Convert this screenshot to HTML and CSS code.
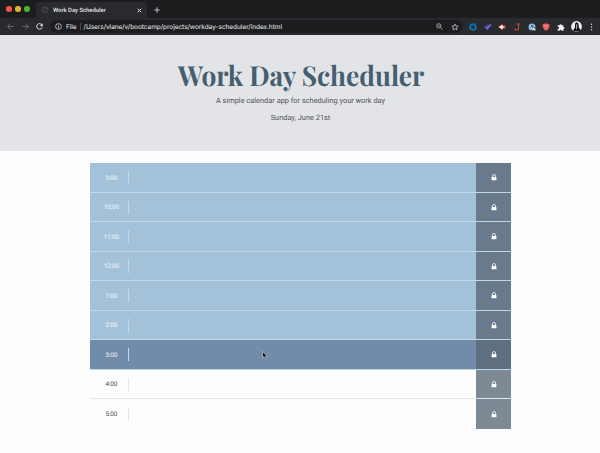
FILE: index.html
```html
<!DOCTYPE html>
<html lang="en">
<head>
<meta charset="utf-8">
<title>Work Day Scheduler</title>
<link rel="stylesheet" href="styles.css">
</head>
<body>
<svg width="0" height="0" class="defs">
  <symbol id="lock" viewBox="0 0 6 7"><path d="M1.5 3V2a1.5 1.5 0 0 1 3 0v1" fill="none" stroke="#fff" stroke-width=".8"/><rect x=".6" y="2.9" width="4.8" height="3.4" rx=".4" fill="#fff"/></symbol>
</svg>
<div class="tabs">
  <div class="lights"><i class="red"></i><i class="yellow"></i><i class="green"></i></div>
  <div class="tab">
    <svg width="8" height="8" viewBox="0 0 8 8"><circle cx="4" cy="4" r="3" fill="#292a2d" stroke="#48494c"/><path d="M1.5 2.5l2 1.2L3 5l1.5 1.4M4.5 1.2l.5 1.5 1.6.8" fill="none" stroke="#4c4d50" stroke-width=".8"/></svg>
    <span class="tab-title">Work Day Scheduler</span>
    <svg width="5" height="5" viewBox="0 0 5 5"><path d="M.7.7l3.6 3.6M4.3.7L.7 4.3" stroke="#e8e8e8" stroke-width="1"/></svg>
  </div>
  <svg class="plus" width="6" height="6" viewBox="0 0 6 6"><path d="M3 .3v5.4M.3 3h5.4" stroke="#c8c9cb" stroke-width=".9"/></svg>
</div>
<div class="toolbar">
  <div class="nav">
    <svg width="7" height="7" viewBox="0 0 7 7"><path d="M6.6 3.5H.8M3.4.7L.7 3.5l2.7 2.8" fill="none" stroke="#77787b" stroke-width=".8"/></svg>
    <svg width="7" height="7" viewBox="0 0 7 7"><path d="M.4 3.5h5.8M3.6.7l2.7 2.8-2.7 2.8" fill="none" stroke="#77787b" stroke-width=".8"/></svg>
    <svg width="7" height="7" viewBox="0 0 7 7"><path d="M5.8 1.8A2.8 2.8 0 1 0 6.2 4.3" fill="none" stroke="#e4e4e5" stroke-width="1"/><path d="M6.7.3v2.9H3.8z" fill="#e4e4e5"/></svg>
  </div>
  <div class="address">
    <svg width="7" height="7" viewBox="0 0 7 7"><circle cx="3.5" cy="3.5" r="2.9" fill="none" stroke="#d4d4d5" stroke-width=".8"/><path d="M3.5 3v2.3M3.5 1.6v.8" stroke="#d4d4d5" stroke-width=".8"/></svg>
    <span class="file">File</span><span class="bar"></span>
    <span class="url">/Users/vlane/v/bootcamp/projects/workday-scheduler/index.html</span>
    <svg class="magnify" width="7" height="7" viewBox="0 0 7 7"><circle cx="2.8" cy="2.8" r="2.1" fill="none" stroke="#bfc0c2" stroke-width=".8"/><path d="M4.4 4.4l2.2 2.2M1.8 2.8h2" stroke="#bfc0c2" stroke-width=".8"/></svg>
    <svg width="8" height="8" viewBox="0 0 8 8"><path d="M4 .9l.9 2.1 2.3.2-1.7 1.5.5 2.2L4 5.7 2 6.9l.5-2.2L.8 3.2 3.1 3z" fill="none" stroke="#c8c9cb" stroke-width=".75"/></svg>
  </div>
  <div class="extensions">
    <svg viewBox="0 0 8 8"><circle cx="4" cy="4" r="2.8" fill="none" stroke="#0877c0" stroke-width="1.6"/><circle cx="4" cy="4" r="3.6" fill="none" stroke="#0877c0" stroke-width=".7" stroke-dasharray="1.4 1.4"/></svg>
    <svg viewBox="0 0 8 8"><path d="M.4 3.8l1.4-1 1.3 1.3L6.4.8l1.2 1.1-4.3 5z" fill="#6c63e8"/><circle cx="3.9" cy="2.3" r=".8" fill="#6c63e8"/></svg>
    <svg viewBox="0 0 8 8"><path d="M0 4l2-1.5L4 1l1 1.5h2L8 4 7 5.5H5L4 7 2 5.5z" fill="#dc5047"/><path d="M1.5 4h4M4 2.3v3.4" stroke="#fff" stroke-width="1.7"/></svg>
    <svg viewBox="0 0 8 8"><path d="M3.7 1h3M5.5 1v4a1.9 1.9 0 0 1-3.8.2" fill="none" stroke="#c65032" stroke-width="1.1"/></svg>
    <svg viewBox="0 0 8 8"><circle cx="4" cy="4" r="3.5" fill="#95b9df"/><path d="M4 4h3v1.5H4zM3 2.3h2.4v1.5H3z" fill="#315f98"/><path d="M4.7 4.7l2.6 2.6" stroke="#eee" stroke-width="1.5"/></svg>
    <svg viewBox="0 0 8 8"><path d="M.5 1.2L4 .3l3.5.9c0 3.4-.7 5.2-3.5 6.6C1.2 6.4.5 4.6.5 1.2z" fill="#e45b58"/><path d="M2 2.5h4M2.3 4.2h3.4" stroke="#f6a09b" stroke-width=".7"/></svg>
    <svg viewBox="0 0 8 8"><path d="M.7 2.2h1.9a1 1 0 1 1 2 0h1.8v1.9a1 1 0 1 1 0 2v1.6H4.6a1 1 0 1 0-2 0H.7V5.8a1 1 0 1 0 0-1.9z" fill="#eee"/></svg>
  </div>
  <svg class="avatar" width="11" height="11" viewBox="0 0 11 11"><circle cx="5.5" cy="5.5" r="5.4" fill="#f0f0f0"/><path d="M2 9.5l2-3V3.7Q4 1.3 5.7 1.3t2 2.5v2.4l2 3-2 1.3H4z" fill="#111"/><path d="M5.3 3h1v2l-.4 3-1 .5z" fill="#aaa"/></svg>
  <svg width="3" height="8" viewBox="0 0 3 8"><g fill="#d8d8da"><circle cx="1.5" cy="1.3" r=".75"/><circle cx="1.5" cy="4" r=".75"/><circle cx="1.5" cy="6.7" r=".75"/></g></svg>
</div>
<header class="hero">
  <h1>Work Day Scheduler</h1>
  <p class="lead">A simple calendar app for scheduling your work day</p>
  <p class="date">Sunday, June 21st</p>
</header>
<main class="schedule">
  <div class="row past"><time>9:00</time><div class="entry"></div><div class="save"><svg><use href="#lock"/></svg></div></div>
  <div class="row past"><time>10:00</time><div class="entry"></div><div class="save"><svg><use href="#lock"/></svg></div></div>
  <div class="row past"><time>11:00</time><div class="entry"></div><div class="save"><svg><use href="#lock"/></svg></div></div>
  <div class="row past"><time>12:00</time><div class="entry"></div><div class="save"><svg><use href="#lock"/></svg></div></div>
  <div class="row past"><time>1:00</time><div class="entry"></div><div class="save"><svg><use href="#lock"/></svg></div></div>
  <div class="row past"><time>2:00</time><div class="entry"></div><div class="save"><svg><use href="#lock"/></svg></div></div>
  <div class="row present"><time>3:00</time><div class="entry"></div><div class="save"><svg><use href="#lock"/></svg></div></div>
  <div class="row future"><time>4:00</time><div class="entry"></div><div class="save"><svg><use href="#lock"/></svg></div></div>
  <div class="row future"><time>5:00</time><div class="entry"></div><div class="save"><svg><use href="#lock"/></svg></div></div>
</main>
<svg class="cursor" width="6" height="9" viewBox="0 0 6 9"><path d="M.5.5v6.3L2 5.6l1.2 2.6 1.3-.6-1.2-2.4h2z" fill="#111" stroke="#ddd" stroke-width=".6"/></svg>
</body>
</html>
```
FILE: styles.css
```css
* { box-sizing: border-box; }
body { margin: 0; height: 453px; overflow: hidden; background: #fdfdfd; font-family: Roboto, sans-serif; text-rendering: geometricPrecision; }
svg { display: block; flex: none; }
.defs { position: absolute; }
.tabs { height: 18px; background: #1c1d1f; display: flex; align-items: flex-start; }
.lights { width: 36px; padding: 6px 0 0 6px; display: flex; gap: 3.5px; }
.lights i { width: 5.6px; height: 5.6px; border-radius: 50%; }
.red { background: #fa5149; }
.yellow { background: #e4b52d; }
.green { background: #48b62c; }
.tab { width: 111px; height: 16px; margin-top: 2px; padding: 0 5px; display: flex; align-items: center; background: #292a2d; border-radius: 4px 4px 0 0; }
.tab-title { flex: 1; margin: 1px 0 0 4px; color: #e5e5e6; font: 500 5.9px/8px Roboto, sans-serif; white-space: nowrap; }
.plus { margin: 7px 0 0 7px; }
.toolbar { height: 17px; background: #292a2d; display: flex; align-items: center; padding: 0 7px 0 7px; }
.nav { display: flex; gap: 7.5px; width: 43px; }
.address { width: 413px; height: 13px; border-radius: 7px; background: #1c1d1f; display: flex; align-items: center; padding: 0 4px 0 5px; }
.file, .url { color: #eeeeef; font: 6.5px/8px Inter, sans-serif; letter-spacing: -.04px; white-space: nowrap; }
.file { margin-left: 4px; }
.bar { width: 1px; height: 7px; margin: 0 3px 0 3px; background: #48494c; }
.magnify { margin: 0 8px 0 auto; }
.extensions { display: flex; gap: 6.7px; margin-left: 6px; }
.extensions svg { width: 8px; height: 8px; }
.avatar { margin-left: 6px; margin-right: 8px; }
.hero { height: 116px; background: #e3e4e8; display: flex; flex-direction: column; align-items: center; color: #505257; }
h1 { margin: 21px 0 0 2px; height: 38px; color: #465f70; font: 700 27.5px/38px "Playfair Display", "Liberation Serif", serif; transform: scaleX(.955); white-space: nowrap; }
.hero p { margin: 0 0 0 1px; font-size: 7.4px; line-height: 10px; }
.hero .lead { margin-top: 2px; }
.hero .date { margin-top: 7px; }
.schedule { width: 421px; height: 265.5px; margin: 12.4px 0 0 90.4px; display: grid; grid-template-rows: repeat(9, 29.5px); }
.row { display: grid; grid-template-columns: 38px 1fr 35px; align-items: center; border-bottom: 1px solid #c0d8e7; }
.row:last-child { border-bottom: 0; }
time { padding-left: 4px; text-align: center; font-size: 6.4px; line-height: 8px; letter-spacing: -.15px; }
.entry { height: 13px; border-left: 1px solid #c5dae8; }
.save { height: 100%; display: grid; place-items: center; background: #697a8c; }
.save svg { width: 6px; height: 7px; }
.past { background: #a3c2da; color: #f5f9fc; }
.present { background: #718caa; color: #f3f6fa; }
.present .save { background: #5d6f81; }
.future { color: #484b51; border-color: #dce8f0; }
.future .entry { border-color: #dce8f2; }
.future .save { background: #7e8996; }
.cursor { position: absolute; left: 262px; top: 351px; }
```
